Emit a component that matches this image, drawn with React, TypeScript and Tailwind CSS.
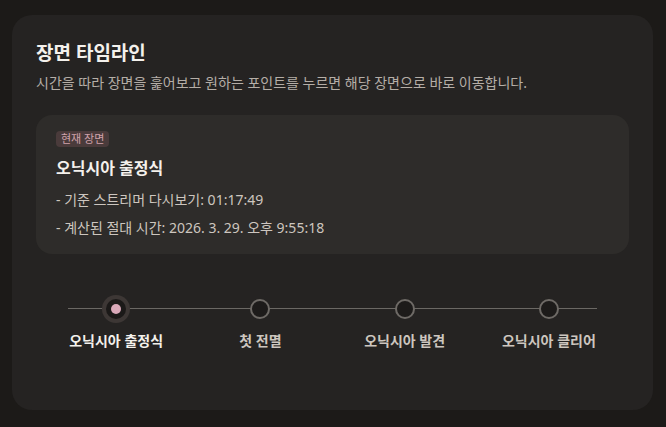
import React from 'react';

const scenes = ['오닉시아 출정식', '첫 전멸', '오닉시아 발견', '오닉시아 클리어'];

const App: React.FC = () => {
  const active = 0;

  return (
    <div
      className="min-h-[427px] w-full bg-[#1c1a18] px-3 pt-[15px] pb-4"
      style={{ fontFamily: '"Noto Sans", "Noto Sans CJK KR", sans-serif' }}
    >
      <div className="w-[641px] rounded-[20px] bg-[#252322] px-6 pt-6 pb-[59px]">
        <h2 className="text-[19px] leading-7 font-bold text-[#f4f1ec]">장면 타임라인</h2>
        <p className="mt-[6px] text-[14px] leading-5 text-[#b5aea7]">
          시간을 따라 장면을 훑어보고 원하는 포인트를 누르면 해당 장면으로 바로 이동합니다.
        </p>

        <div className="mt-[22px] rounded-2xl bg-[#2e2c2a] px-5 pt-4 pb-4">
          <div className="flex">
            <span className="flex h-4 items-center rounded bg-[#4a3b3b] px-[5px] text-[11px] leading-4 text-[#d0a3ab]">
              현재 장면
            </span>
          </div>
          <h3 className="mt-[10px] text-[16px] leading-[22px] font-bold text-[#f4f1ec]">오닉시아 출정식</h3>
          <div className="mt-[11px] flex flex-col gap-2 text-[14px] leading-5 text-[#cdc6bf]">
            <p>- 기준 스트리머 다시보기: 01:17:49</p>
            <p>- 계산된 절대 시간: 2026. 3. 29. 오후 9:55:18</p>
          </div>
        </div>

        <div className="relative mt-[41px] px-2">
          <div className="absolute top-[13px] right-8 left-8 h-px bg-[#6b6864]" />
          <div className="relative grid grid-cols-4">
            {scenes.map((name, i) => (
              <button key={name} className="flex flex-col items-center">
                <div className="flex h-7 w-7 items-center justify-center">
                  {i === active ? (
                    <div className="flex h-7 w-7 items-center justify-center rounded-full bg-[#3d3735]">
                      <div className="flex h-5 w-5 items-center justify-center rounded-full bg-[#1b1918]">
                        <div className="h-[10px] w-[10px] rounded-full bg-[#d9a8b8]" />
                      </div>
                    </div>
                  ) : (
                    <div className="h-5 w-5 rounded-full border-2 border-[#6e6a66] bg-[#1d1b1a]" />
                  )}
                </div>
                <span
                  className={
                    i === active
                      ? 'mt-2 text-[14px] leading-5 font-bold text-[#f4f1ec]'
                      : 'mt-2 text-[14px] leading-5 font-bold text-[#cdc6bf]'
                  }
                >
                  {name}
                </span>
              </button>
            ))}
          </div>
        </div>
      </div>
    </div>
  );
};

export default App;
